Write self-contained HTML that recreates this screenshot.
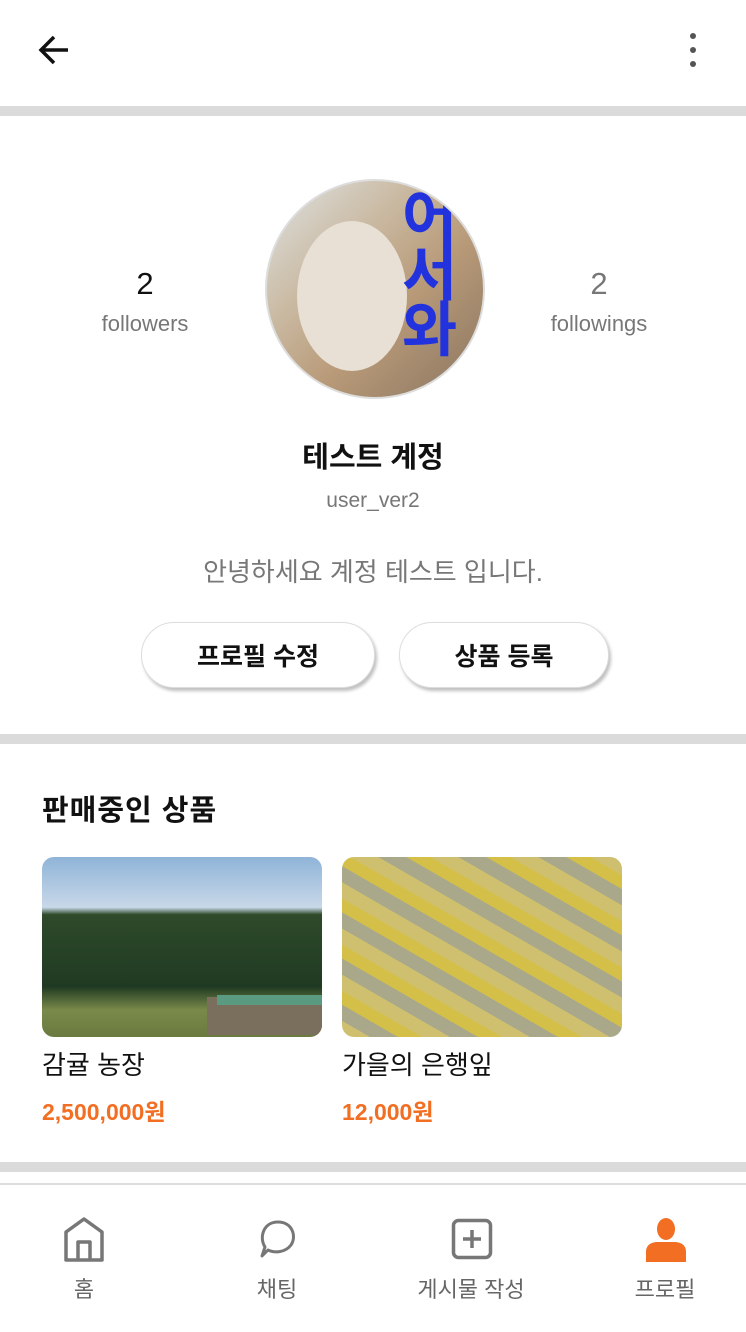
<!DOCTYPE html>
<html><head><meta charset="utf-8"><style>
*{margin:0;padding:0;box-sizing:border-box}
body{width:746px;height:1332px;background:#fff;font-family:"Liberation Sans","Noto Sans CJK KR",sans-serif;position:relative;overflow:hidden}
.a{position:absolute}
.sep{position:absolute;left:0;width:746px;height:10px;background:#dbdbdb}
.c{text-align:center}
.btn{position:absolute;top:622px;height:66px;border-radius:33px;background:#fff;border:1px solid #ddd;box-shadow:2px 3px 3px rgba(0,0,0,.25);font-size:25px;font-weight:bold;text-align:center;line-height:68px;color:#111}
.nav{position:absolute;top:1272px;font-size:22px;color:#666;text-align:center;width:160px}
</style></head><body>
<svg class="a" style="left:36px;top:32px" width="36" height="36" viewBox="0 0 36 36"><path d="M32 18H6M18 5L5 18l13 13" stroke="#111" stroke-width="3.5" fill="none"/></svg>
<div class="a" style="left:690px;top:33px;width:6px;height:6px;border-radius:3px;background:#555"></div>
<div class="a" style="left:690px;top:47px;width:6px;height:6px;border-radius:3px;background:#555"></div>
<div class="a" style="left:690px;top:61px;width:6px;height:6px;border-radius:3px;background:#555"></div>
<div class="sep" style="top:106px"></div>
<div class="a c" style="left:65px;top:266px;width:160px;font-size:31px;color:#111">2</div>
<div class="a c" style="left:65px;top:311px;width:160px;font-size:22px;color:#777">followers</div>
<div class="a c" style="left:519px;top:266px;width:160px;font-size:31px;color:#777">2</div>
<div class="a c" style="left:519px;top:311px;width:160px;font-size:22px;color:#777">followings</div>
<div class="a" style="left:265px;top:179px;width:220px;height:220px;border-radius:50%;border:2px solid #ddd;overflow:hidden;background:linear-gradient(135deg,#dfe3e3 0%,#c9b8a0 35%,#b89a78 60%,#8a7560 100%)">
<div class="a" style="left:30px;top:40px;width:110px;height:150px;border-radius:50%;background:#e8e0d4"></div>
<div class="a" style="left:135px;top:10px;font-size:60px;color:#2233dd;font-weight:bold;line-height:56px">어<br>서<br>와</div>
</div>
<div class="a c" style="left:0;top:434px;width:746px;font-size:29px;font-weight:bold;color:#111">테스트 계정</div>
<div class="a c" style="left:0;top:489px;width:746px;font-size:21px;color:#777">user_ver2</div>
<div class="a c" style="left:0;top:552px;width:746px;font-size:26px;color:#777">안녕하세요 계정 테스트 입니다.</div>
<div class="btn" style="left:141px;width:234px">프로필 수정</div>
<div class="btn" style="left:399px;width:210px">상품 등록</div>
<div class="sep" style="top:734px"></div>
<div class="a" style="left:42px;top:787px;font-size:29px;font-weight:bold;color:#111;letter-spacing:1px">판매중인 상품</div>
<div class="a" style="left:42px;top:857px;width:280px;height:180px;border-radius:12px;overflow:hidden;background:linear-gradient(#8fb4d8 0%,#c8d8e8 28%,#2e4a2a 32%,#1f3a22 72%,#7a8a4a 85%,#6a7a40 100%)">
<div class="a" style="left:165px;top:140px;width:115px;height:38px;background:#7a6e5c"></div>
<div class="a" style="left:175px;top:138px;width:105px;height:10px;background:#5a9a80"></div></div>
<div class="a" style="left:342px;top:857px;width:280px;height:180px;border-radius:12px;background:repeating-linear-gradient(30deg,#cfc070 0 14px,#a9a88a 14px 28px,#d4c048 28px 40px)"></div>
<div class="a" style="left:42px;top:1045px;font-size:26px;color:#111">감귤 농장</div>
<div class="a" style="left:342px;top:1045px;font-size:26px;color:#111">가을의 은행잎</div>
<div class="a" style="left:42px;top:1093px;font-size:23px;font-weight:bold;color:#f26e22">2,500,000원</div>
<div class="a" style="left:342px;top:1093px;font-size:23px;font-weight:bold;color:#f26e22">12,000원</div>
<div class="sep" style="top:1162px"></div>
<div class="a" style="left:0;top:1183px;width:746px;height:2px;background:#ddd"></div>
<svg class="a" style="left:63px;top:1216px" width="42" height="46" viewBox="0 0 42 46"><path d="M3 44V16L21 3l18 13v28zM15 44V26h12v18" stroke="#777" stroke-width="3.5" fill="none" stroke-linejoin="round"/></svg>
<svg class="a" style="left:256px;top:1218px" width="44" height="42" viewBox="0 0 44 42"><path d="M6 38l3-9C3 20 7 4 22 4c14 0 19 14 13 23-6 8-17 8-23 5z" stroke="#777" stroke-width="3" fill="none" stroke-linejoin="round"/></svg>
<svg class="a" style="left:451px;top:1218px" width="42" height="42" viewBox="0 0 42 42"><rect x="2.5" y="2.5" width="37" height="37" rx="5" stroke="#777" stroke-width="3.5" fill="none"/><path d="M21 12v18M12 21h18" stroke="#777" stroke-width="3.5"/></svg>
<svg class="a" style="left:645px;top:1218px" width="42" height="44" viewBox="0 0 42 44"><ellipse cx="21" cy="11" rx="9" ry="11" fill="#f26e22"/><path d="M1 44V34c0-7 5-10 12-10h16c7 0 12 3 12 10v10z" fill="#f26e22"/></svg>
<div class="nav" style="left:4px">홈</div>
<div class="nav" style="left:197px">채팅</div>
<div class="nav" style="left:391px;width:160px">게시물 작성</div>
<div class="nav" style="left:585px">프로필</div>
</body></html>
